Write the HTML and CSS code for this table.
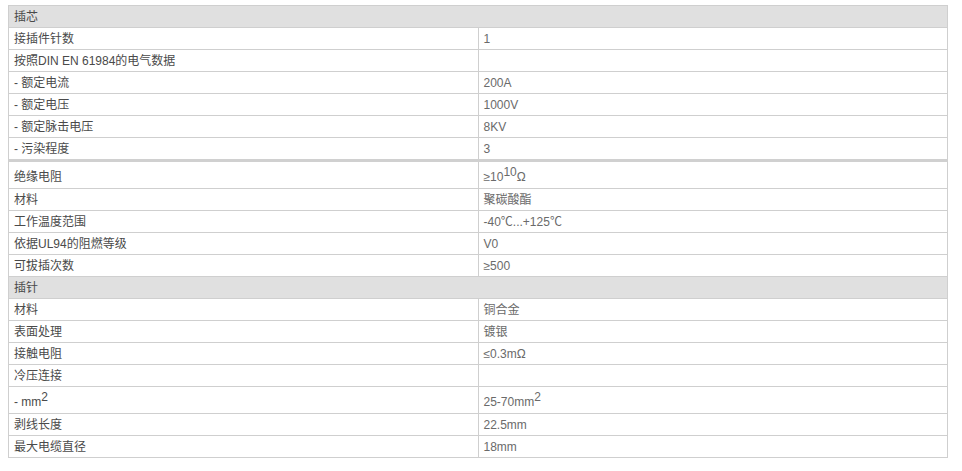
FILE: index.html
```html
<!DOCTYPE html>
<html>
<head>
<meta charset="utf-8">
<link rel="stylesheet" href="styles.css">
</head>
<body>
<table class="spec">
  <tr class="group"><td colspan="2">插芯</td></tr>
  <tr><td class="k">接插件针数</td><td class="v">1</td></tr>
  <tr><td class="k">按照DIN EN 61984的电气数据</td><td class="v"></td></tr>
  <tr><td class="k">- 额定电流</td><td class="v">200A</td></tr>
  <tr><td class="k">- 额定电压</td><td class="v">1000V</td></tr>
  <tr><td class="k">- 额定脉击电压</td><td class="v">8KV</td></tr>
  <tr><td class="k">- 污染程度</td><td class="v">3</td></tr>
  <tr class="sep tall"><td class="k">绝缘电阻</td><td class="v">≥10<sup>10</sup>Ω</td></tr>
  <tr><td class="k">材料</td><td class="v">聚碳酸酯</td></tr>
  <tr><td class="k">工作温度范围</td><td class="v">-40℃...+125℃</td></tr>
  <tr><td class="k">依据UL94的阻燃等级</td><td class="v">V0</td></tr>
  <tr><td class="k">可拔插次数</td><td class="v">≥500</td></tr>
  <tr class="group"><td colspan="2">插针</td></tr>
  <tr><td class="k">材料</td><td class="v">铜合金</td></tr>
  <tr><td class="k">表面处理</td><td class="v">镀银</td></tr>
  <tr><td class="k">接触电阻</td><td class="v">≤0.3mΩ</td></tr>
  <tr><td class="k">冷压连接</td><td class="v"></td></tr>
  <tr class="tall2"><td class="k">- mm<sup>2</sup></td><td class="v">25-70mm<sup>2</sup></td></tr>
  <tr><td class="k">剥线长度</td><td class="v">22.5mm</td></tr>
  <tr><td class="k">最大电缆直径</td><td class="v">18mm</td></tr>
</table>
</body>
</html>
```

FILE: styles.css
```css
html, body {
  background: #fff;
}
body {
  margin: 5px 8px;
  font-family: "Liberation Sans", Arial, "Noto Sans CJK SC", sans-serif;
  font-size: 12px;
}
.spec {
  width: 940px;
  border-collapse: collapse;
  table-layout: fixed;
}
.spec td {
  border: 1px solid #cfcfcf;
  padding: 1px 5px 0;
  line-height: 20px;
  vertical-align: middle;
  box-sizing: border-box;
  height: 22px;
}
.spec td.k {
  width: 469px;
  color: #4a4a4a;
}
.spec td.v {
  color: #6a6a6a;
}
.spec .group td {
  background: #e0e0e0;
  color: #4a4a4a;
}
.spec .sep td {
  border-top: 3px solid #d0d0d0;
}
.spec .tall td {
  height: 28px;
  padding-top: 3px;
}
.spec .tall2 td {
  height: 27px;
  padding-top: 4px;
}
.spec sup {
  font-size: 12px;
  line-height: 0;
  vertical-align: 5px;
}
```
